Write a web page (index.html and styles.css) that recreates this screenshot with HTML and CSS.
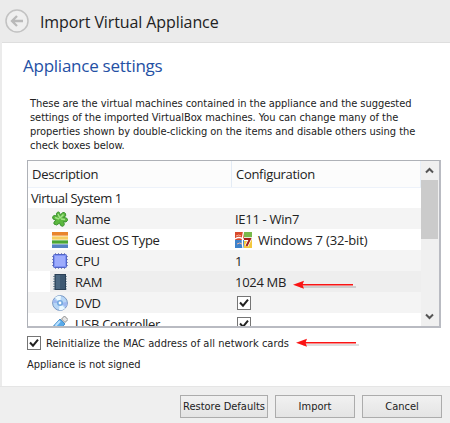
FILE: index.html
```html
<!DOCTYPE html>
<html lang="en">
<head>
<meta charset="utf-8">
<title>Import Virtual Appliance</title>
<link rel="stylesheet" href="styles.css">
</head>
<body>
<div class="wizard">
  <header class="titlebar">
    <svg class="back" viewBox="0 0 24 24"><circle cx="12" cy="12" r="11" fill="#efefef" stroke="#c2c2c2" stroke-width="1.5"/><path d="M18 12H7.500M12 7l-5 5 5 5" fill="none" stroke="#b9b9b9" stroke-width="2.300"/></svg>
    <h1>Import Virtual Appliance</h1>
  </header>
  <main class="page">
    <h2>Appliance settings</h2>
    <p class="intro">These are the virtual machines contained in the appliance and the suggested<br>settings of the imported VirtualBox machines. You can change many of the<br>properties shown by double-clicking on the items and disable others using the<br>check boxes below.</p>
    <div class="table">
      <div class="rows">
        <div class="row head"><span class="desc">Description</span><span class="conf">Configuration</span></div>
        <div class="row system"><span>Virtual System 1</span></div>
        <div class="row alt">
          <span class="item"><svg class="icon" viewBox="0 0 16 16"><path d="M5.500 1.200Q8 0 8 4.500Q11-.5 13.500 2.500Q15 5 11.500 6.500Q16 6.500 15.500 9.500Q14.500 12 11.500 10.500Q13.500 14.500 10.500 15.300Q8.500 15.500 7.500 12Q4.500 15.500 2 13Q1 11 4 9.300Q0 8.500 .6 5.800Q1.500 3.500 5 5Q3.500 2.500 5.500 1.200Z" fill="#5cb83f" stroke="#3f9333"/><path d="M3 6.500l4 1.500M6 3l2 4 3.500-3.500M9 8l4 .5" stroke="#a3e388" stroke-width="1.500" fill="none"/></svg><span>Name</span></span>
          <span>IE11 - Win7</span>
        </div>
        <div class="row">
          <span class="item"><svg class="icon" viewBox="0 0 16 16"><path fill="#e9852c" d="M0 0h16v4H0z"/><path fill="#f6ce61" d="M0 4h16v4H0z"/><path fill="#4aa633" d="M0 8h16v4H0z"/><path fill="#5583c1" d="M0 12h16v4H0z"/><path d="M0 4h16M0 8h16M0 12h16" stroke="#fff" opacity=".7"/></svg><span>Guest OS Type</span></span>
          <span class="os"><svg class="icon" viewBox="0 0 17 16"><path fill="#d8492c" d="M0 0h9v8H0z"/><path fill="#78b94c" d="M9 0h8v8H9z"/><path fill="#3e82ca" d="M0 8h9v8H0z"/><path fill="#f3c83d" d="M9 8h8v8H9z"/><path d="M0 7q4-3 8 0t9-1M8.500 0Q6.500 8 8 16" stroke="#fff" stroke-width="1.300" fill="none"/><path d="M1 4q3-2 5 0M2 12q3-2 5 0" stroke="#f6b49b" fill="none"/><path d="M9 7h6l-3.500 7" stroke="#fff" stroke-width="3.500" fill="none"/><path d="M9 7h6l-3.500 7" stroke="#a62019" stroke-width="2" fill="none"/></svg><span class="os-name">Windows 7 (32-bit)</span></span>
        </div>
        <div class="row alt">
          <span class="item"><svg class="icon" viewBox="0 0 16 16"><path d="M3.500 0v16M6.500 0v16M9.500 0v16M12.500 0v16M0 3.500h16M0 6.500h16M0 9.500h16M0 12.500h16" stroke="#8b8fc0"/><rect x="1.500" y="1.500" width="13" height="13" rx="1" fill="#7e91f4" stroke="#5265c4"/><rect x="3" y="3" width="10" height="10" fill="#9eacfc"/></svg><span>CPU</span></span>
          <span>1</span>
        </div>
        <div class="row selected">
          <span class="item"><svg class="icon" viewBox="0 0 16 16"><path d="M1 2.500h14M1 5h14M1 7.500h14M1 10h14M1 12.500h14M1 15h14" stroke="#8298a8"/><rect x="3" y=".5" width="10.500" height="15" fill="#3d5871" stroke="#2b4055"/><path d="M4 1h4v14H4z" fill="#54708a" opacity=".7"/></svg><span>RAM</span></span>
          <span>1024 MB</span>
          <svg class="arrow ram-arrow" viewBox="0 0 64 12"><path d="M7 8h56" stroke="#777" stroke-width="1.500" opacity=".35"/><path d="M9 5.700h51" stroke="#fa1414" stroke-width="1.500"/><path d="M0 5.700l11-4-1.500 4 1.500 4z" fill="#fa1414"/></svg>
        </div>
        <div class="row alt">
          <span class="item"><svg class="icon" viewBox="0 0 16 16"><circle cx="8" cy="8" r="7.400" fill="#b7d6f6" stroke="#7797c3"/><path d="M8 8L3 2.500A7 7 0 0 1 9 1zM8 8l5 5.500A7 7 0 0 1 7 15z" fill="#ecf9ff"/><path d="M8 8L1 8a7 7 0 0 1 1-4zM8 8l7-1a7 7 0 0 1-1 5z" fill="#9fb9f0"/><circle cx="8" cy="8" r="3" fill="#72a8df"/><circle cx="8" cy="8" r="1.400" fill="#fff"/></svg><span>DVD</span></span>
          <span class="checkcell"><svg class="check" viewBox="0 0 14 14"><rect x=".5" y=".5" width="13" height="13" fill="#fff" stroke="#757575"/><path d="M3 6.500l3 3.200 5-6" fill="none" stroke="#222" stroke-width="2"/></svg></span>
        </div>
        <div class="row">
          <span class="item"><svg class="icon" viewBox="0 0 16 16"><path d="M9.500 3l3-3L16 3.500l-3 3z" fill="#e5e5e5" stroke="#888"/><path d="M8 3l5 5-6.500 7q-2 2-4.500 0t-.5-5z" fill="#58a9e8" stroke="#4a8fca"/><path d="M8 5L3.500 10" stroke="#b8e0ff" stroke-width="2"/></svg><span>USB Controller</span></span>
          <span class="checkcell"><svg class="check" viewBox="0 0 14 14"><rect x=".5" y=".5" width="13" height="13" fill="#fff" stroke="#757575"/><path d="M3 6.500l3 3.200 5-6" fill="none" stroke="#222" stroke-width="2"/></svg></span>
        </div>
      </div>
      <div class="scrollbar">
        <svg viewBox="0 0 17 18"><path d="M5 11l3.500-3.500L12 11" fill="none" stroke="#555" stroke-width="2"/></svg>
        <div class="thumb"></div>
        <svg class="down" viewBox="0 0 17 18"><path d="M5 7l3.500 3.500L12 7" fill="none" stroke="#555" stroke-width="2"/></svg>
      </div>
    </div>
    <div class="mac"><svg class="check" viewBox="0 0 14 14"><rect x=".5" y=".5" width="13" height="13" fill="#fff" stroke="#757575"/><path d="M3 6.500l3 3.200 5-6" fill="none" stroke="#222" stroke-width="2"/></svg><span>Reinitialize the MAC address of all network cards</span><svg class="arrow" viewBox="0 0 64 12"><path d="M7 8h56" stroke="#777" stroke-width="1.500" opacity=".3"/><path d="M9 5.700h51" stroke="#fa1414" stroke-width="1.500"/><path d="M0 5.700l11-4-1.500 4 1.500 4z" fill="#fa1414"/></svg></div>
    <div class="signed">Appliance is not signed</div>
  </main>
  <footer class="actions"><button class="restore">Restore Defaults</button><button>Import</button><button>Cancel</button></footer>
</div>
</body>
</html>
```

FILE: styles.css
```css
* { box-sizing: border-box; }
body { margin: 0; overflow: hidden; }
.wizard { width: 450px; height: 423px; display: flex; flex-direction: column; background: #ebebeb; color: #222; font: 11px "DejaVu Sans Condensed", "DejaVu Sans", sans-serif; font-stretch: condensed; white-space: nowrap; }
svg { display: block; flex: none; }
.titlebar { height: 42px; flex: none; display: flex; align-items: center; padding-left: 5px; gap: 11px; }
.back { width: 24px; height: 24px; }
h1, h2 { margin: 0; font-family: "Open Sans", sans-serif; font-weight: 400; font-stretch: normal; }
h1 { font-size: 16px; line-height: 42px; padding-top: 2px; letter-spacing: -.1px; }
.page { height: 344px; flex: none; margin-left: 2px; padding: 11px 9px 0 25px; background: #fff; border-top: 1px solid #dedede; }
h2 { margin-left: -4px; font-size: 17px; line-height: 24px; color: #2450a4; letter-spacing: -.25px; }
.intro { margin: 19px 0 7px 3px; line-height: 14px; letter-spacing: -.04px; }
.table { width: 414px; height: 168px; display: flex; justify-content: space-between; border: 1px solid #aeb1b7; border-bottom: 2px solid #b9bbc2; border-right: 2px solid #b9bbc2; font: 13px "Open Sans", sans-serif; letter-spacing: -.3px; overflow: hidden; }
.rows { width: 393px; }
.row { position: relative; display: grid; grid-template-columns: 204px 1fr; align-items: center; height: 21px; padding-left: 3px; }
.alt { background: #f4f4f4; }
.selected { background: linear-gradient(90deg, #fff 22px, #eee 22px); }
.head { height: 27px; padding: 0; grid-template-columns: 203px 1fr; background: #fcfcfc; border-bottom: 1px solid #edf2fa; border-right: 1px solid #e8eff7; }
.system { height: 20px; letter-spacing: -.42px; }
.desc { padding-left: 4px; }
.conf { padding-left: 4px; line-height: 26px; border-left: 1px solid #e3ebf5; }
.item, .os { display: flex; align-items: center; gap: 7px; }
.item { padding-left: 21px; }
.icon { width: 16px; height: 16px; }
.os .icon { width: 17px; }
.os { gap: 6px; }
.os-name { letter-spacing: -.15px; }
.check { width: 14px; height: 14px; }
.checkcell { padding-left: 2px; }
.arrow { width: 64px; height: 12px; }
.ram-arrow { position: absolute; left: 265px; top: 8px; }
.scrollbar { width: 18px; display: flex; flex-direction: column; background: #f0f0f0; }
.scrollbar svg { width: 17px; height: 19px; }
.thumb { width: 17px; height: 59px; background: #cbcbcb; }
.scrollbar .down { margin-top: auto; }
.mac { display: flex; align-items: center; height: 16px; margin-top: 7px; gap: 5px; letter-spacing: .04px; }
.mac .arrow { margin-left: 2px; }
.signed { margin-top: 7px; line-height: 14px; letter-spacing: -.07px; }
.actions { flex: 1; display: flex; gap: 7px; padding: 8px 0 0 180px; background: #efefef; border-top: 1px solid #e5e5e5; }
button { width: 80px; height: 23px; padding: 0; border: 1px solid #acacac; background: linear-gradient(#f1f1f1, #e4e4e4); color: #222; font: inherit; }
.restore { width: 88px; }
```
